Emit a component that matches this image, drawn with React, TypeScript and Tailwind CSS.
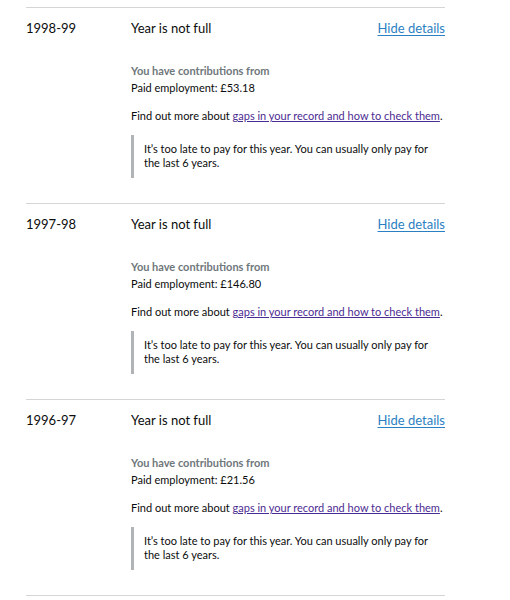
const years = [
  { year: "1998-99", amount: "£53.18" },
  { year: "1997-98", amount: "£146.80" },
  { year: "1996-97", amount: "£21.56" },
]

function YearSection({ year, amount }: { year: string; amount: string }) {
  return (
    <section className="border-t border-[#d5d5d5]">
      <div className="flex items-center pt-[10px] text-[13px] leading-[20px] text-[#0b0c0c]">
        <span className="w-[105px]">{year}</span>
        <span className="flex-1">Year is not full</span>
        <a href="#" className="text-[#2b7fc3] underline underline-offset-2">
          Hide details
        </a>
      </div>
      <div className="ml-[105px] pt-[24px] pb-[25px] text-[11px] text-[#0b0c0c]">
        <p className="font-bold leading-[17px] text-[#6f777b]">You have contributions from</p>
        <p className="leading-[18px]">Paid employment: {amount}</p>
        <p className="mt-[10px] whitespace-nowrap leading-[18px]">
          Find out more about{" "}
          <a href="#" className="text-[#4c2c92] underline underline-offset-1">
            gaps in your record and how to check them
          </a>
          .
        </p>
        <div className="mt-[10px] w-[310px] border-l-[3px] border-[#b1b4b6] pt-[7px] pb-[8px] pl-[10px] leading-[14px]">
          It’s too late to pay for this year. You can usually only pay for the last 6 years.
        </div>
      </div>
    </section>
  )
}

export default function App() {
  return (
    <div className="min-h-[600px] bg-white pt-[7px] font-['Lato',Arial,sans-serif]">
      <div className="ml-[26px] w-[419px]">
        {years.map((y) => (
          <YearSection key={y.year} {...y} />
        ))}
        <div className="border-t border-[#d5d5d5]" />
      </div>
    </div>
  )
}
